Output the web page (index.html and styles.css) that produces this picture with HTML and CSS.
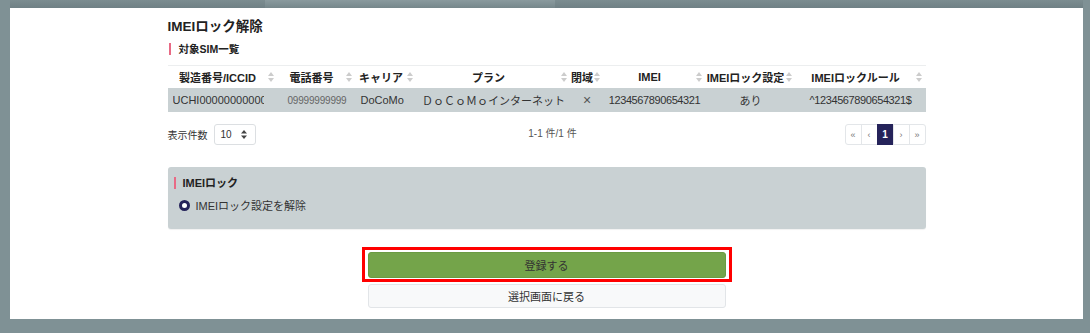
FILE: index.html
```html
<!DOCTYPE html>
<html lang="ja">
<head>
    <meta charset="UTF-8">
    <meta name="viewport" content="width=device-width, initial-scale=1.0">
    <title>IMEIロック解除</title>
    <link rel="stylesheet" href="styles.css">
</head>
<body>
    <div class="topbar">
        <div class="topbar-tab"></div>
        <div class="topbar-gap"></div>
        <div class="topbar-rest"></div>
    </div>

    <div class="panel">
        <div class="content">
            <h1 class="page-title">IMEIロック解除</h1>
            <h2 class="section-title">対象SIM一覧</h2>

            <table class="sim-table">
                <colgroup>
                    <col style="width: 110px">
                    <col style="width: 78px">
                    <col style="width: 61px">
                    <col style="width: 154px">
                    <col style="width: 33px">
                    <col style="width: 102px">
                    <col style="width: 90px">
                    <col style="width: 130px">
                </colgroup>
                <thead>
                    <tr>
                        <th><div class="th-inner"><span class="th-text">製造番号/ICCID</span><span class="sort"></span></div></th>
                        <th><div class="th-inner"><span class="th-text">電話番号</span><span class="sort"></span></div></th>
                        <th><div class="th-inner"><span class="th-text">キャリア</span><span class="sort"></span></div></th>
                        <th><div class="th-inner"><span class="th-text">プラン</span><span class="sort"></span></div></th>
                        <th><div class="th-inner"><span class="th-text">閉域</span><span class="sort"></span></div></th>
                        <th><div class="th-inner"><span class="th-text">IMEI</span><span class="sort"></span></div></th>
                        <th><div class="th-inner"><span class="th-text">IMEIロック設定</span><span class="sort"></span></div></th>
                        <th><div class="th-inner"><span class="th-text">IMEIロックルール</span><span class="sort"></span></div></th>
                    </tr>
                </thead>
                <tbody>
                    <tr>
                        <td class="cell-iccid"><span class="clip">UCHI0000000000000000</span></td>
                        <td class="cell-tel">09999999999</td>
                        <td>DoCoMo</td>
                        <td class="center">ＤｏＣｏＭｏインターネット</td>
                        <td class="center cell-cross">×</td>
                        <td class="center num">1234567890654321</td>
                        <td class="center">あり</td>
                        <td class="center num">^1234567890654321$</td>
                    </tr>
                </tbody>
            </table>

            <div class="table-footer">
                <div class="page-size">
                    <span>表示件数</span>
                    <div class="select">
                        <span>10</span>
                        <svg width="6" height="9" viewBox="0 0 6 9"><path d="M0 3.5 3 0 6 3.5Z M0 5.5 3 9 6 5.5Z" fill="#444"/></svg>
                    </div>
                </div>
                <div class="page-info">1-1 件/1 件</div>
                <ul class="pagination">
                    <li>«</li>
                    <li>‹</li>
                    <li class="active">1</li>
                    <li>›</li>
                    <li>»</li>
                </ul>
            </div>

            <div class="lock-card">
                <h2 class="section-title">IMEIロック</h2>
                <label class="radio-row">
                    <span class="radio"></span>
                    <span>IMEIロック設定を解除</span>
                </label>
            </div>

            <div class="actions">
                <div class="highlight">
                    <button class="btn btn-submit">登録する</button>
                </div>
                <button class="btn btn-back">選択画面に戻る</button>
            </div>
        </div>
    </div>
</body>
</html>
```

FILE: styles.css
```css
body {
    margin: 0;
    background-color: #7f9195;
    font-family: "Liberation Sans", "Noto Sans CJK JP", sans-serif;
    color: #333;
}

/* Strip behind the panel */
.topbar {
    display: flex;
    height: 8px;
    padding-left: 10px;
}

.topbar-tab {
    width: 255px;
    background: linear-gradient(#7b8c90, #6f8085);
}

.topbar-gap {
    width: 290px;
    background: linear-gradient(#8a9a9e, #76878b);
}

.topbar-rest {
    flex: 1;
    background: linear-gradient(#7b8c90, #6f8085);
    margin-right: 7px;
}

.panel {
    background-color: #fff;
    margin: 0 7px 0 10px;
    height: 311px;
    box-sizing: border-box;
    padding-top: 10px;
}

.content {
    width: 758px;
    margin: 0 auto;
}

.page-title {
    font-size: 13.5px;
    font-weight: bold;
    color: #222;
    margin: 0;
    line-height: 18px;
}

.section-title {
    font-size: 10.5px;
    font-weight: bold;
    color: #222;
    margin: 7px 0 0 1px;
    padding-left: 8px;
    border-left: 2px solid #e86a85;
    line-height: 12px;
}

/* SIM table */
.sim-table {
    width: 758px;
    table-layout: fixed;
    border-collapse: collapse;
    margin-top: 10px;
    font-size: 11px;
}

.sim-table th {
    border-top: 1px solid #eceeef;
    height: 22px;
    padding: 0;
    font-weight: bold;
    color: #222;
    white-space: nowrap;
}

.th-inner {
    display: flex;
    align-items: center;
    padding-right: 4px;
}

.th-text {
    flex: 1;
    text-align: center;
}

.sort {
    width: 6px;
    height: 12px;
    position: relative;
}

.sort::before,
.sort::after {
    content: "";
    position: absolute;
    left: 0;
    border-left: 3px solid transparent;
    border-right: 3px solid transparent;
}

.sort::before {
    top: 1px;
    border-bottom: 4px solid #cccccc;
}

.sort::after {
    bottom: 1px;
    border-top: 4px solid #cccccc;
}

.sim-table td {
    background-color: #c9d1d3;
    height: 24px;
    padding: 0 5px;
    white-space: nowrap;
    overflow: hidden;
    color: #333;
}

.sim-table td.center {
    text-align: center;
    padding: 0;
}

.sim-table td.num {
    letter-spacing: -0.4px;
}

.sim-table td.cell-cross {
    font-size: 14px;
    color: #555;
}

.cell-iccid {
    padding-right: 14px !important;
}

.clip {
    display: block;
    overflow: hidden;
}

.sim-table td.cell-tel {
    font-size: 10px;
    color: #666;
    padding-left: 10px;
    letter-spacing: -0.2px;
}

/* Footer under the table */
.table-footer {
    display: flex;
    align-items: center;
    margin-top: 12px;
    height: 21px;
}

.page-size {
    display: flex;
    align-items: center;
    gap: 6px;
    font-size: 10px;
    width: 92px;
}

.select {
    width: 42px;
    height: 21px;
    box-sizing: border-box;
    border: 1px solid #dcdfe2;
    border-radius: 3px;
    display: flex;
    align-items: center;
    justify-content: space-between;
    padding: 0 8px 0 6px;
    font-size: 10px;
}

.page-info {
    flex: 1;
    text-align: center;
    font-size: 10px;
    color: #555;
    margin-top: -4px;
}

.pagination {
    display: flex;
    list-style: none;
    margin: 0;
    padding: 0;
}

.pagination li {
    width: 17px;
    height: 21px;
    box-sizing: border-box;
    border: 1px solid #e3e6e9;
    margin-left: -1px;
    display: flex;
    align-items: center;
    justify-content: center;
    font-size: 9px;
    color: #777;
}

.pagination li:first-child {
    border-radius: 3px 0 0 3px;
}

.pagination li:last-child {
    border-radius: 0 3px 3px 0;
}

.pagination li.active {
    background-color: #25235a;
    border-color: #25235a;
    color: #fff;
    font-weight: bold;
    font-size: 10px;
}

/* IMEI lock card */
.lock-card {
    background-color: #c9d1d3;
    border-radius: 3px;
    margin-top: 22px;
    height: 62px;
    box-sizing: border-box;
    padding: 3px 6px 0;
    box-shadow: 0 1px 1px rgba(0, 0, 0, 0.06);
}

.lock-card .section-title {
    font-size: 11px;
    margin-left: 0;
    padding-left: 7px;
}

.radio-row {
    display: flex;
    align-items: center;
    gap: 6px;
    margin-top: 8px;
    margin-left: 5px;
    font-size: 11px;
    color: #333;
}

.radio {
    width: 11px;
    height: 11px;
    border-radius: 50%;
    box-sizing: border-box;
    border: 3px solid #25235a;
    background-color: #fff;
}

/* Buttons */
.actions {
    display: flex;
    flex-direction: column;
    align-items: center;
    margin-top: 18px;
}

.highlight {
    border: 3px solid #f00;
    padding: 2px 3px 1px;
}

.btn {
    width: 358px;
    font-family: inherit;
    font-size: 11px;
    border-radius: 3px;
    cursor: pointer;
}

.btn-submit {
    display: block;
    height: 26px;
    background-color: #74a44a;
    border: 1px solid #6a9a42;
    color: #333;
}

.btn-back {
    height: 24px;
    margin-top: 2px;
    background-color: #f8f9fa;
    border: 1px solid #e2e5e8;
    color: #333;
}
```
